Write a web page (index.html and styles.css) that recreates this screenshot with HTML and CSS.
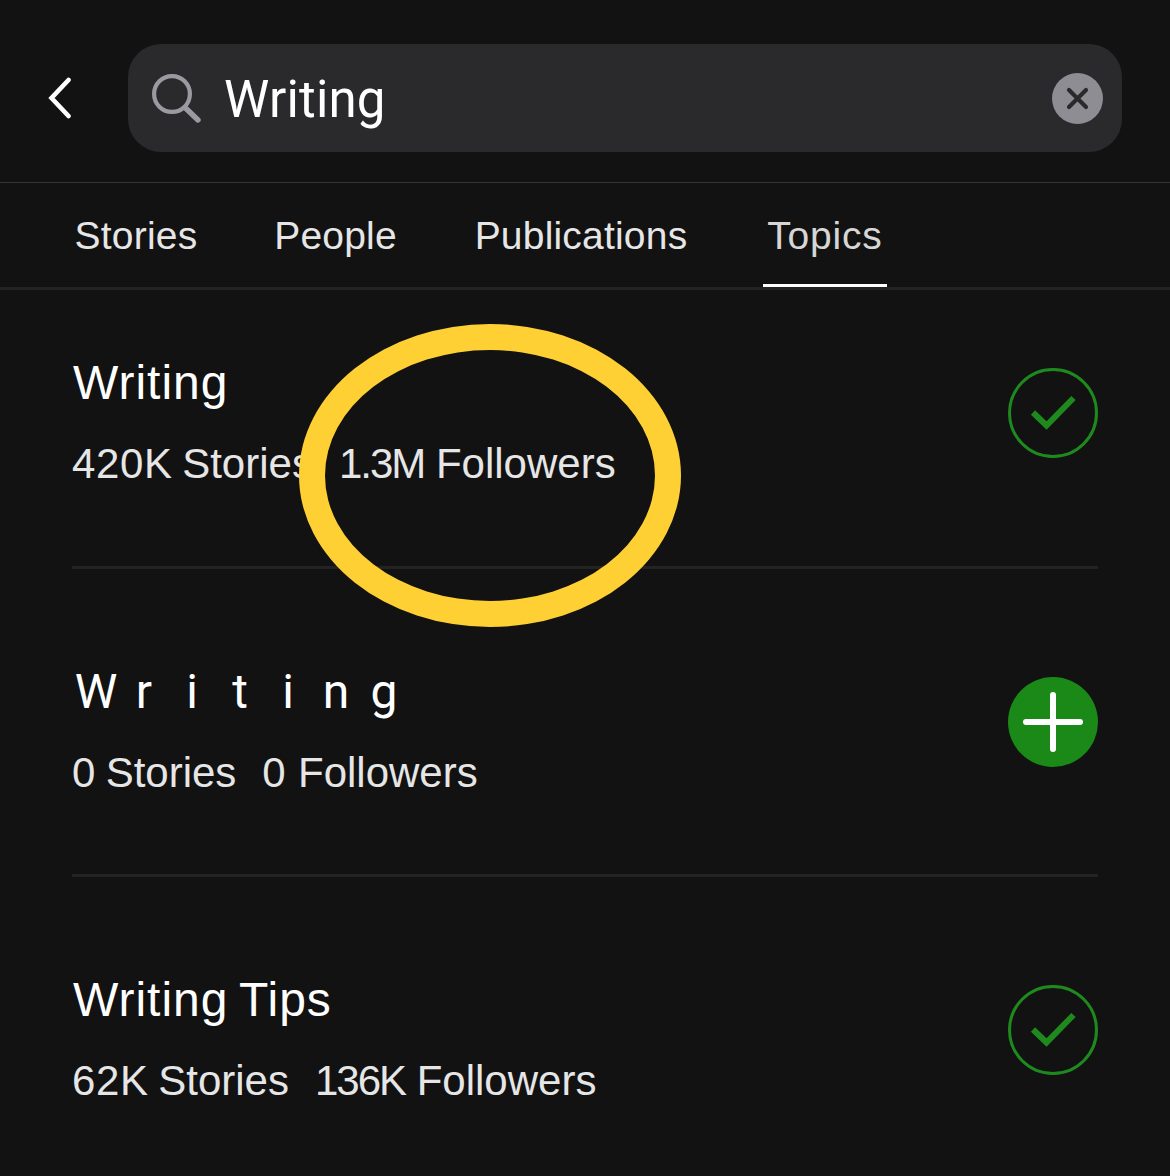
FILE: index.html
```
<!DOCTYPE html>
<html lang="en">
<head>
    <meta charset="UTF-8">
    <meta name="viewport" content="width=device-width, initial-scale=1.0">
    <title>Search - Topics</title>
    <link rel="stylesheet" href="styles.css">
</head>
<body>
    <header class="header">
        <a class="back" href="#" aria-label="Back">
            <svg width="24" height="42" viewBox="0 0 24 42">
                <path d="M21.5 3 L4.5 21 L21.5 39" fill="none" stroke="#fff" stroke-width="4.6" stroke-linecap="round"/>
            </svg>
        </a>
        <div class="search">
            <svg class="search-icon" width="50" height="50" viewBox="0 0 50 50">
                <circle cx="20" cy="21" r="17.9" fill="none" stroke="#9b9aa1" stroke-width="4.2"/>
                <path d="M33 34.5 L46 47" stroke="#9b9aa1" stroke-width="5.4" stroke-linecap="round"/>
            </svg>
            <span class="search-text">Writing</span>
            <button class="clear" aria-label="Clear">
                <svg width="51" height="51" viewBox="0 0 51 51">
                    <circle cx="25.5" cy="25.5" r="25.5" fill="#8e8d93"/>
                    <path d="M17 17 L34 34 M34 17 L17 34" stroke="#2a2a2c" stroke-width="4.2" stroke-linecap="round"/>
                </svg>
            </button>
        </div>
    </header>

    <nav class="tabs">
        <a class="tab">Stories</a>
        <a class="tab">People</a>
        <a class="tab">Publications</a>
        <a class="tab active">Topics</a>
    </nav>

    <ul class="topics">
        <li class="topic">
            <div class="info">
                <h2>Writing</h2>
                <p><span class="stories"><span class="num">420K</span> Stories</span><span class="followers"><span class="num-tight">1.3M</span> Followers</span></p>
            </div>
            <svg class="follow" width="90" height="90" viewBox="0 0 90 90">
                <circle cx="45" cy="45" r="43.5" fill="none" stroke="#1e8a1e" stroke-width="3"/>
                <path d="M25 44.5 L38.5 57.5 L65.5 30" fill="none" stroke="#1e8a1e" stroke-width="6"/>
            </svg>
            <div class="highlight"></div>
        </li>
        <li class="topic">
            <div class="info">
                <h2 class="wide"><span>W</span><span>r</span><span>i</span><span>t</span><span>i</span><span>n</span><span>g</span></h2>
                <p><span class="stories"><span class="num">0</span> Stories</span><span class="followers"><span class="num">0</span> Followers</span></p>
            </div>
            <svg class="follow" width="90" height="90" viewBox="0 0 90 90">
                <circle cx="45" cy="45" r="45" fill="#1a8917"/>
                <path d="M45 18 V72 M18 45 H72" stroke="#fff" stroke-width="6" stroke-linecap="round"/>
            </svg>
        </li>
        <li class="topic">
            <div class="info">
                <h2>Writing Tips</h2>
                <p><span class="stories"><span class="num">62K</span> Stories</span><span class="followers"><span class="num-tight">136K</span> Followers</span></p>
            </div>
            <svg class="follow" width="90" height="90" viewBox="0 0 90 90">
                <circle cx="45" cy="45" r="43.5" fill="none" stroke="#1e8a1e" stroke-width="3"/>
                <path d="M25 44.5 L38.5 57.5 L65.5 30" fill="none" stroke="#1e8a1e" stroke-width="6"/>
            </svg>
        </li>
    </ul>
</body>
</html>
```
FILE: styles.css
```
* {
    box-sizing: border-box;
    margin: 0;
    padding: 0;
}
body {
    font-family: "Liberation Sans", Arial, sans-serif;
    background: #121212;
    color: white;
    height: 1176px;
    overflow: hidden;
}
.header {
    display: flex;
    align-items: flex-start;
    height: 183px;
    padding: 44px 48px 0 47px;
    border-bottom: 1px solid #343434;
}
.back {
    width: 81px;
    padding-top: 33px;
}
.back svg {
    display: block;
}
.search {
    flex: 1;
    display: flex;
    align-items: center;
    height: 108px;
    padding: 0 19px 0 24px;
    background: #2a2a2c;
    border-radius: 33px;
}
.search-text {
    flex: 1;
    margin-left: 22px;
    padding-top: 4px;
    font-family: Roboto, sans-serif;
    font-size: 51px;
    line-height: 60px;
    letter-spacing: 0.2px;
}
.clear {
    border: none;
    background: none;
    cursor: pointer;
}
.clear svg {
    display: block;
}
.tabs {
    display: grid;
    grid-template-columns: 128px 127px 220px 124px;
    column-gap: 72px;
    height: 107px;
    padding: 0 72px;
    border-bottom: 3px solid #232323;
}
.tab {
    padding-top: 30px;
    font-size: 39px;
    line-height: 46px;
    letter-spacing: 0.2px;
    text-align: center;
    white-space: nowrap;
    color: #e6e6e6;
}
.tab.active {
    color: #d6d6d6;
    letter-spacing: 0.8px;
    border-bottom: 3px solid white;
}
.topics {
    list-style: none;
}
.topic {
    position: relative;
    display: flex;
    justify-content: space-between;
    height: 308px;
    margin: 0 72px;
    padding-top: 94px;
    border-bottom: 3px solid #232323;
}
.topic:first-child {
    height: 279px;
    padding-top: 64px;
}
.topic:last-child {
    border-bottom: none;
}
.topic h2 {
    padding-left: 1px;
    font-size: 48px;
    font-weight: normal;
    line-height: 58px;
    letter-spacing: 1px;
    word-spacing: -3px;
}
.topic h2.wide {
    display: flex;
    padding-left: 0;
    font-family: Roboto, sans-serif;
    letter-spacing: 0;
}
/* full-width letters, one em each */
.wide span {
    width: 48px;
    text-align: center;
}
.topic p {
    margin-top: 27px;
    font-size: 42px;
    line-height: 50px;
    color: #e6e6e6;
    white-space: nowrap;
}
.stories {
    margin-right: 26px;
    word-spacing: -2px;
}
.num {
    letter-spacing: 0.6px;
}
.num-tight {
    letter-spacing: -2px;
}
.follow {
    margin-top: 14px;
}
/* yellow marker round the follower count */
.highlight {
    position: absolute;
    left: 227px;
    top: 34px;
    width: 382px;
    height: 303px;
    border: 26px solid #ffd033;
    border-radius: 50%;
    z-index: 1;
}
```
